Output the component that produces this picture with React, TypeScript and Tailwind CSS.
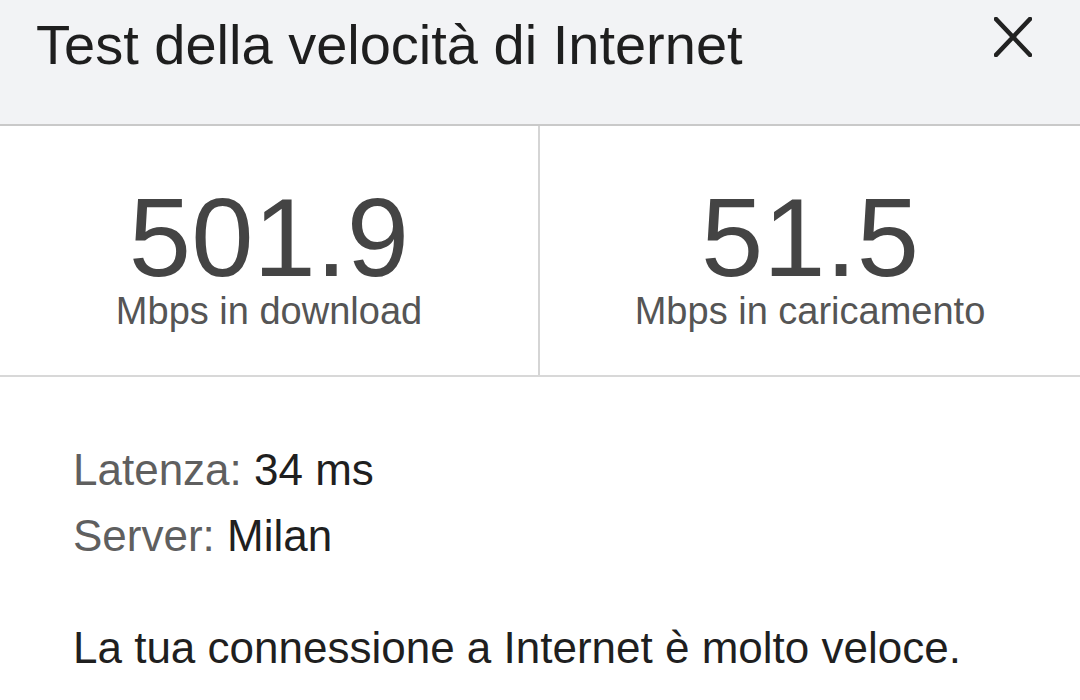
import React from 'react';

const font = { fontFamily: '"Liberation Sans", Arial, sans-serif' };

function CloseIcon() {
  return (
    <svg width="38" height="40" viewBox="0 0 38 40" className="text-[#222]">
      <path d="M2 2 L36 38 M36 2 L2 38" stroke="currentColor" strokeWidth="4.5" strokeLinecap="square" fill="none" />
    </svg>
  );
}

function Stat({ value, label }: { value: string; label: string }) {
  return (
    <div className="flex flex-col items-center pt-[59px]">
      <div className="text-[112px] leading-[106px] text-[#444]">{value}</div>
      <div className="text-[38px] leading-[38px] text-[#555] mt-[1px]">{label}</div>
    </div>
  );
}

export default function App() {
  return (
    <div className="w-[1080px] h-[700px] bg-white overflow-hidden" style={font}>
      {/* Header */}
      <header className="h-[126px] bg-[#f2f3f5] border-b-2 border-[#c9c9c9] flex justify-between items-start pl-[36px] pr-[48px]">
        <h1 className="pt-[17px] text-[56px] leading-none text-[#1e1e1e]">Test della velocità di Internet</h1>
        <button className="mt-[17px]">
          <CloseIcon />
        </button>
      </header>

      {/* Results */}
      <div className="grid grid-cols-2 h-[251px] border-b-2 border-[#d8d8d8]">
        <div className="border-r-2 border-[#d5d5d5]">
          <Stat value="501.9" label="Mbps in download" />
        </div>
        <Stat value="51.5" label="Mbps in caricamento" />
      </div>

      {/* Details */}
      <div className="pl-[73px] pt-[60px] text-[44px] leading-[66px] text-[#1f1f1f]">
        <div>
          <span className="text-[#5f5f5f]">Latenza:</span> 34 ms
        </div>
        <div>
          <span className="text-[#5f5f5f]">Server:</span> Milan
        </div>
        <div className="mt-[46px]">La tua connessione a Internet è molto veloce.</div>
      </div>
    </div>
  );
}
